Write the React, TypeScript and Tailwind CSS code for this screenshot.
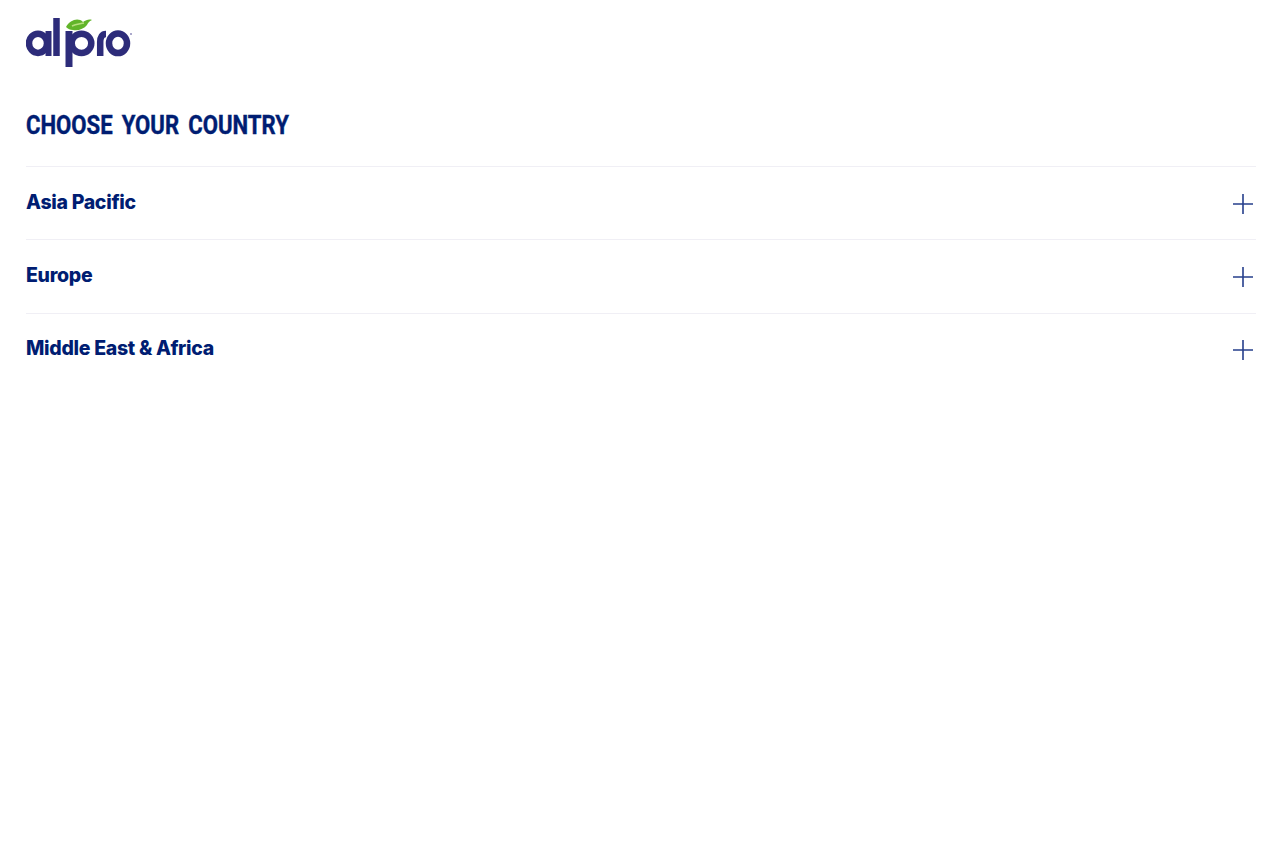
const rows = ["Asia Pacific", "Europe", "Middle East & Africa"];

function Logo() {
  return (
    <svg width="108" height="52" viewBox="0 0 108 52" className="block" aria-label="alpro">
      <g fill="none" stroke="#2d2c7a" strokeWidth="6.5">
        <ellipse cx="12" cy="26.3" rx="9" ry="9.6" />
        <ellipse cx="55.5" cy="26.3" rx="9.8" ry="9.6" />
        <ellipse cx="92" cy="26.3" rx="9" ry="9.8" />
        <path d="M22.5 14v25" strokeWidth="6" />
        <path d="M30.5 1v38" strokeWidth="6.5" />
        <path d="M43 14v36" strokeWidth="7" />
        <path d="M74.2 39V25c0-5 2-8 5.8-8" strokeWidth="6.5" />
      </g>
      <path d="M40 10C44 3 52 0 57 5c3-2 6-3 9-2-3 1-4 3-5 5-3 4-9 6-14 5-3 0-5-1-7-3z" fill="#62b52a" />
      <path d="M46 9c4-2 8-2 12-3" stroke="#b7e07e" strokeWidth="1.5" fill="none" />
      <circle cx="105" cy="17" r="1" fill="#8f8dbb" />
    </svg>
  );
}

function Plus() {
  return (
    <svg width="20" height="20" viewBox="0 0 20 20" className="shrink-0 mt-[5px]">
      <path d="M0 10h20M10 0v20" stroke="#263f8c" strokeWidth="1.6" fill="none" />
    </svg>
  );
}

export default function App() {
  return (
    <div className="min-h-[853px] bg-white pl-[26px] pr-[24px] pt-[17px] [font-family:Inter,sans-serif] text-[#001d72]">
      <Logo />
      <h1 className="mt-[41px] mb-[24px] origin-left scale-x-[0.885] text-[25px] leading-[32px] font-bold whitespace-nowrap [font-family:Roboto,sans-serif] [word-spacing:4px] [-webkit-text-stroke:0.4px_#001d72]">
        CHOOSE YOUR COUNTRY
      </h1>
      <div>
        {rows.map((r) => (
          <div key={r} className="flex h-[73.4px] items-center justify-between border-t border-[#f0eff5] pr-[3px] pb-[4px]">
            <span className="mt-[1px] text-[19.5px] leading-[28px] font-extrabold tracking-[-0.3px]">{r}</span>
            <Plus />
          </div>
        ))}
      </div>
    </div>
  );
}
